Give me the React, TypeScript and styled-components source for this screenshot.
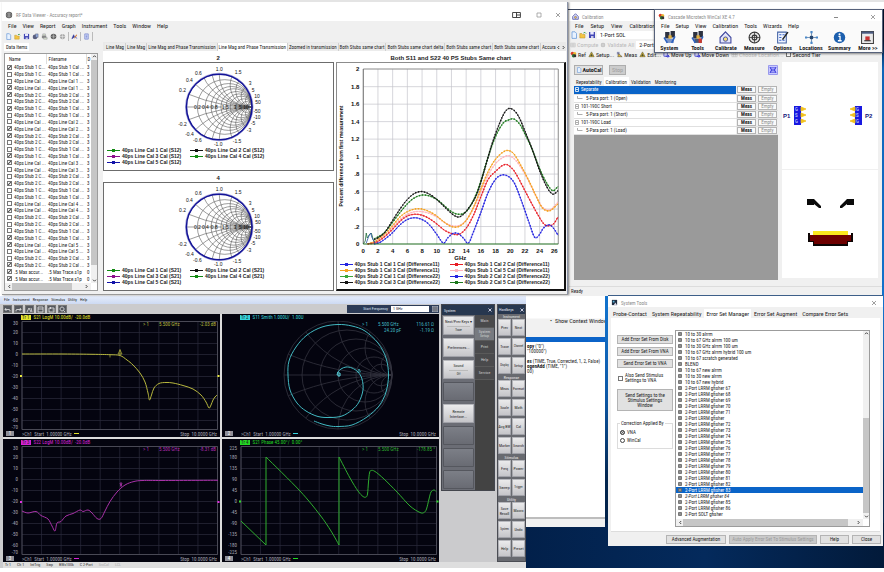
import React from 'react';
import styled, { createGlobalStyle, css } from 'styled-components';

const UI = '"Roboto Condensed", Roboto, "Liberation Sans", sans-serif';
const BOLD = '"Liberation Sans", Arial, sans-serif';

const Global = createGlobalStyle`
  *, *::before, *::after { box-sizing: border-box; }
  body { margin: 0; background: #fff; font: 6px/8px ${UI}; color: #1c1c1c; }
  button, input, select { font: inherit; color: inherit; margin: 0; padding: 0; border-radius: 0; }
  svg { display: block; flex: none; }
`;

/* ---------- desktop and shared window parts ---------- */

const Desktop = styled.main`
  position: relative;
  min-height: 572px;
  overflow: hidden;
  background: #fff;
  border-top: 2px solid #e4e4e4;
`;

const Wallpaper = styled.div`
  position: absolute;
  top: 7px; right: 0; bottom: 4px; left: 569px;
  background:
    linear-gradient(180deg, #04122c 0, #04122c 30px, rgba(8, 80, 150, 0) 60px),
    linear-gradient(180deg, #0d62b4 0, #1272cc 300px, #0d57a4 390px, #03264f 470px, #021f44 100%);
`;
const WallpaperFoot = styled.div`
  position: absolute;
  height: 45px; right: 0; bottom: 4px; left: 526px;
  background: linear-gradient(90deg, #02204a, #042a5c 50%, #021a3a);
`;

const Window = styled.section<{ $bg?: string }>`
  position: absolute;
  display: flex;
  flex-direction: column;
  overflow: hidden;
  background: ${p => p.$bg || '#f0f0f0'};
`;

const RfWindow = styled(Window)`
  top: 0; left: 2px; right: 316px; height: 293px;
  border-bottom: 1px solid #9a9a9a;
  border-right: 1px solid #8a93a8;
  box-shadow: 1px 0 2px rgba(0, 0, 0, .5);
`;
const CalWindow = styled(Window)`top: 7px; left: 568px; right: 2px; height: 287px; padding-left: 1px; border-top: 1px solid #39445c;`;
const WinCalWindow = styled(Window)`
  top: 7px; left: 654px; right: 1px; height: 44px; background: #fafafa;
  border: 1px solid #56617a; box-shadow: 0 1px 2px rgba(0, 0, 0, .45);
`;
const VnaWindow = styled(Window)`top: 294px; left: 0; right: 358px; bottom: 4px;`;
const ScriptWindow = styled(Window)`top: 294px; left: 526px; right: 279px; height: 231px; background: #fff;`;
const ToolsWindow = styled(Window)`
  top: 293px; left: 608px; right: 1px; height: 251px;
  border: 1px solid #3d5e88; border-width: 1px 0 0;
`;

const TitleBar = styled.header<{ $h: number }>`
  display: flex; align-items: center; gap: 3px;
  flex: 0 0 ${p => p.$h}px;
  padding: 2px 5px 0 3px;
  background: #fff;
  color: #8c8c8c;
  font-size: 5px;
`;
const RfTitleBar = styled(TitleBar)`padding-top: 6px;`;
const TitleText = styled.h1`margin: 0; flex: 1; font: inherit; white-space: nowrap;`;
const Caption = styled.button<{ $gap?: number }>`
  border: 0; background: none; width: 8px; height: 8px; margin-left: ${p => p.$gap ?? 8}px;
`;
const Menu = styled.nav<{ $gap: number; $h: number }>`
  display: flex; align-items: center; gap: ${p => p.$gap}px;
  flex: 0 0 ${p => p.$h}px;
  padding-left: 6px;
`;
const MenuItem = styled.button<{ $small?: boolean }>`
  border: 0; background: none; white-space: nowrap; color: #222;
  ${p => p.$small && css`font-size: 4px;`}
`;
const Bar = styled.div<{ $h: number; $gap?: number; $pad?: number }>`
  display: flex; align-items: center; gap: ${p => p.$gap ?? 2}px;
  flex: 0 0 ${p => p.$h}px;
  padding-left: ${p => p.$pad ?? 3}px;
  overflow: hidden;
`;
const IconButton = styled.button<{ $dim?: boolean }>`
  display: flex; align-items: center; gap: 1px; border: 0; background: none; white-space: nowrap;
  color: ${p => (p.$dim ? '#a8a8a8' : '#222')};
  opacity: ${p => (p.$dim ? .75 : 1)};
`;
const Check = styled.input.attrs({ type: 'checkbox' })`
  appearance: none; display: block; flex: none; width: 5px; height: 5px;
  border: 1px solid #777; background: #fff;
  &:checked { background: linear-gradient(135deg, #fff 30%, #555 45%, #555 60%, #fff 70%); }
`;
const Close = () => (
  <svg width="8" height="8" viewBox="0 0 8 8" stroke="#888" strokeWidth=".8"><path d="M2 2l4 4M6 2l-4 4" /></svg>
);

/* ---------- small icons ---------- */

const GLYPHS: Record<string, React.ReactNode> = {
  globe: <><circle cx="4" cy="4" r="3.2" fill="#555" /><path d="M1 4h6M4 1v6M2 2q2 2 4 0M2 6q2-2 4 0" stroke="#ccc" strokeWidth=".5" fill="none" /></>,
  globe2: <><circle cx="4" cy="4" r="3" fill="#aaa" /><path d="M1 4h6M4 1v6" stroke="#eee" strokeWidth=".6" /></>,
  page: <path d="M2 .8h3l1.500 1.600v5H2z" fill="#e8f2ff" stroke="#5a8fd6" strokeWidth=".7" />,
  open: <><path d="M.8 7V2.500h2l1 1H6V7z" fill="#f4c542" stroke="#b8902c" strokeWidth=".5" /><path d="M4.500 2q1.500-1.500 2.500.5" stroke="#2a9a3a" strokeWidth=".9" fill="none" /></>,
  save: <><path d="M1 1h6v6H1z" fill="#4348b4" /><path d="M2.300 1h3.400v2.500H2.300z" fill="#e8e8ff" /><path d="M3 5h2.500v2H3z" fill="#c9c9e8" /></>,
  saveAll: <><circle cx="3.500" cy="4.500" r="2.700" fill="#5a5f80" /><path d="M4 1h3v4H4z" fill="#8fa6d8" stroke="#445" strokeWidth=".4" /></>,
  tools: <><path d="M1 1h6v6H1z" fill="#1d2b3f" /><path d="M2 2h2v2H2z" fill="#58b0d8" /><path d="M5 4l2 3H3z" fill="#d8d8e8" /></>,
  print: <><path d="M1 3h5v3H1z" fill="#888" /><path d="M2 1h3v2H2zM3 5h4v2H3z" fill="#dde6d0" stroke="#667" strokeWidth=".4" /></>,
  wand: <><path d="M1 6.500L3 2l1 2.500z" fill="#333b9e" stroke="#333b9e" strokeWidth=".7" /><path d="M4 6l2.500-4" stroke="#d0732c" strokeWidth="1.200" /><path d="M5 5l2 1" stroke="#5566cc" /></>,
  doc: <path d="M2 1h4v6H2zM3 2.500h2M3 4h2M3 5.500h2" fill="#dfe6ff" stroke="#5c6fc4" strokeWidth=".7" />,
  cal: <><path d="M4 .8L7.200 4v3.200H.8V4z" fill="#dfe2ff" stroke="#3a3f96" strokeWidth=".8" /><circle cx="4" cy="5" r="1.300" fill="#f0c040" stroke="#3a3f96" strokeWidth=".5" /></>,
  multi: <><circle cx="2.800" cy="2.800" r="2" fill="#d83a2a" /><circle cx="5.400" cy="3" r="1.800" fill="#eab830" /><circle cx="4" cy="5.400" r="2" fill="#2d7a3b" /><path d="M4 4h3v3H4z" fill="#333" /></>,
  gearY: <><path d="M1 6.500L4 1l3 5.500z" fill="#efc12e" stroke="#4a4a2a" strokeWidth=".6" /><path d="M4 3v3M2.500 5h3" stroke="#343" strokeWidth=".8" /></>,
  probe: <><path d="M1 1h3v3H1z" fill="#8b8fb0" /><path d="M3 3l4 3.500H2z" fill="#e6bb38" stroke="#444" strokeWidth=".6" /></>,
  arrow: <><path d="M1 1h4v5H1z" fill="#dfe2ff" stroke="#3838c0" strokeWidth=".8" /><path d="M3 6h4M5.500 4.500L7 6 5.500 7.500" stroke="#2020d0" fill="none" /></>,
  grey: <path d="M1 1.500h6v5H1zM1 4h6M3 1.500v5M5 1.500v5" fill="#eee" stroke="#aaa" strokeWidth=".7" />,
};
const Glyph = ({ name, size = 7 }: { name: string; size?: number }) => (
  <svg width={size} height={size} viewBox="0 0 8 8">{GLYPHS[name]}</svg>
);

/* ---------- curve helpers ---------- */

type Pt = [number, number];
const smooth = (p: Pt[]) => {
  let d = `M${p[0][0]} ${p[0][1]}`;
  for (let i = 0; i < p.length - 1; i++) {
    const a = p[i - 1] || p[i], b = p[i], c = p[i + 1], e = p[i + 2] || c;
    d += `C${(b[0] + (c[0] - a[0]) / 6).toFixed(2)} ${(b[1] + (c[1] - a[1]) / 6).toFixed(2)} ${(c[0] - (e[0] - b[0]) / 6).toFixed(2)} ${(c[1] - (e[1] - b[1]) / 6).toFixed(2)} ${c[0]} ${c[1]}`;
  }
  return d;
};
const pairs = (s: string): Pt[] => s.trim().split(/\s+/).map(q => q.split(',').map(Number) as Pt);

const SmithGrid = ({ id, cx, cy, r, rs, xs, color, w }: { id: string; cx: number; cy: number; r: number; rs: number[]; xs: number[]; color: string; w: number }) => (
  <g stroke={color} strokeWidth={w} fill="none">
    <clipPath id={id}><circle cx={cx} cy={cy} r={r} /></clipPath>
    <circle cx={cx} cy={cy} r={r} />
    <path d={`M${cx - r} ${cy}h${2 * r}`} />
    {rs.map(k => <circle key={k} cx={cx + (r * k) / (1 + k)} cy={cy} r={r / (1 + k)} />)}
    <g clipPath={`url(#${id})`}>
      {xs.map(x => (
        <React.Fragment key={x}>
          <circle cx={cx + r} cy={cy - r / x} r={r / x} />
          <circle cx={cx + r} cy={cy + r / x} r={r / x} />
        </React.Fragment>
      ))}
    </g>
  </g>
);

/* ---------- RF Data Viewer ---------- */

const RfBody = styled.div`display: flex; flex: 1; min-height: 0; gap: 5px; padding: 0 1px 3px 2px;`;
const DataPane = styled.aside`display: flex; flex-direction: column; flex: 0 0 94px; padding-top: 1px;`;
const PaneTab = styled.h2`
  margin: 0; align-self: flex-start; padding: 0 2px; height: 8px;
  font: 5px/8px ${UI}; background: #fff; white-space: nowrap;
`;
const ListBox = styled.div`
  display: grid; grid-template-columns: 1fr 6px; grid-template-rows: 1fr 7px;
  flex: 1; min-height: 0; margin-top: 2px;
  border: 1px solid #9c9c9c; background: #fff;
`;
const ListClip = styled.div`overflow: hidden; min-height: 0; padding-left: 2px;`;
const ItemTable = styled.table`
  width: 100%; height: 235px; border-collapse: collapse; table-layout: fixed;
  font-size: 5px; line-height: 6px; white-space: nowrap;
  th { height: 10px; font-weight: normal; text-align: left; padding: 0 0 0 2px; border-right: 1px solid #ddd; }
  td { padding: 0; overflow: hidden; }
  th:nth-child(1) { width: 39px; }
  th:nth-child(2) { width: 40px; }
  th:nth-child(3) { padding-left: 1px; border-right: 0; }
  td:nth-child(2) { padding-left: 2px; }
  td:nth-child(3) { padding-left: 1px; }
`;
const ItemLabel = styled.label`display: flex; align-items: center; gap: 2px; height: 6px; white-space: nowrap;`;
const VScroll = styled.div<{ $top: number; $size: number }>`
  display: flex; flex-direction: column; justify-content: space-between; align-items: center;
  background: linear-gradient(#c6c6c6, #c6c6c6) 0 ${p => p.$top}px / 100% ${p => p.$size}px no-repeat #f0f0f0;
`;
const HScroll = styled.div<{ $to: string }>`
  display: flex; justify-content: space-between; align-items: center; padding: 0 2px;
  background: linear-gradient(#c6c6c6, #c6c6c6) 7px 0 / ${p => p.$to} 100% no-repeat #f0f0f0;
`;
const Arrow = ({ d }: { d: 'u' | 'd' | 'l' | 'r' }) => (
  <svg width="5" height="5" viewBox="0 0 5 5" fill="none" stroke="#333" strokeWidth=".9">
    <path d={{ u: 'M1 3.200L2.500 1.700 4 3.200', d: 'M1 1.700L2.500 3.200 4 1.700', l: 'M3.200 1L1.700 2.500 3.200 4', r: 'M1.700 1L3.200 2.500 1.700 4' }[d]} />
  </svg>
);

const GraphPane = styled.div`display: flex; flex-direction: column; flex: 1; min-width: 0;`;
const TabStrip = styled.div`
  display: flex; align-items: center; flex: 0 0 9px; padding-top: 1px; min-width: 0; overflow: hidden; background: #e9e9e9;
`;
const ViewTab = styled.button<{ $on?: boolean }>`
  border: 0; border-right: 1px solid #d0d0d0; height: 8px; padding: 0 1px; flex: none;
  font-size: 5px; line-height: 8px; white-space: nowrap;
  background: ${p => (p.$on ? '#fff' : '#ececec')};
`;
const TabCut = styled.div`display: flex; flex: 1; min-width: 0; overflow: hidden; padding-left: 2px;`;
const GraphArea = styled.div`
  display: grid; grid-template-columns: 1fr 1fr; gap: 2px; flex: 1; min-height: 0; background: #fff;
`;
const GraphColumn = styled.div`display: flex; flex-direction: column; min-width: 0;`;
const GraphTitle = styled.h3`
  margin: 0; height: 11px; text-align: center; white-space: nowrap;
  font: bold 6px/15px ${BOLD};
`;
const SmithPanel = styled.div`flex: 1; border: 1px solid #6c6c6c; background: #fff;`;
const ChartPanel = styled.div`
  flex: 1; border: 1px solid #8c8c8c; border-right: 2px solid #111; border-bottom: 2px solid #111; background: #fff;
`;
const Legend = styled.ul<{ $cols: string }>`
  display: grid; grid-template-columns: ${p => p.$cols}; margin: 0; padding: 0 0 0 3px; list-style: none;
`;
const LegendItem = styled.li<{ $c: string }>`
  display: flex; align-items: center; gap: 2px; white-space: nowrap;
  font: bold 5px/6px ${BOLD};
  &::before {
    content: ''; width: 13px; height: 3px;
    background:
      linear-gradient(${p => p.$c}, ${p => p.$c}) 5px 0 / 3px 3px no-repeat,
      linear-gradient(${p => p.$c}, ${p => p.$c}) 0 1px / 100% 1px no-repeat;
  }
`;

const CHECKED = [0, 3, 4, 6, 9, 10, 13, 14, 17, 21, 25, 26, 29, 30, 31, 32];
const KINDS = 'S1 S1 L1 L1 S2 S2 S1 S1 L2 L2 S2 S2 S1 S1 L3 L3 S2 S2 S1 S1 L4 L4 S2 S2 S1 S1 L5 L5 S2 S2'.split(' ');
const ITEMS = KINDS.map(k =>
  k[0] === 'S' ? [`40ps Stub ${k[1]} C...`, `40ps Stub ${k[1]} Cal ...`, '3'] : ['40ps Line Cal ...', `40ps Line Cal ${k[1]} ...`, '3'],
).concat([['.5 Max accur...', '.5 Max Trace.s1p', '0'], ['.5 Max accur...', '.5 Max Trace.s1p', '0'], ['.5 Max Trace...', '.5 S11...', '']]);

const VIEW_TABS = ['Line Mag', 'Line Mag', 'Line Mag and Phase Transmission', 'Line Mag and Phase Transmission', 'Zoomed in transmission', 'Both Stubs same chart', 'Both Stubs same chart delta', 'Both Stubs same chart', 'Both Stubs same chart', 'Accura'];

const SMITH_LABELS: [string, number, number][] = [
  ['1.0', 116, 8], ['0.6', 95, 12], ['0.4', 86, 19], ['0.2', 79, 29], ['-0.2', 79, 63], ['-0.4', 86, 73], ['-0.6', 94, 79],
  ['-1.0', 115, 83], ['-1.5', 134, 80], ['-3', 146, 69], ['-5', 150, 62], ['-10', 154, 56], ['-50', 154, 50],
  ['50', 155, 41], ['10', 154, 35], ['5', 150, 29], ['3', 147, 22], ['1.5', 135, 11],
  ['0.2', 94, 46], ['0.4', 102, 46], ['0.8', 111, 46], ['1.5', 122, 46], ['3', 132, 46], ['5', 137, 46], ['10', 143, 46],
];
const SmallSmith = ({ id }: { id: string }) => (
  <svg width="100%" height="84" viewBox="0 0 230 84">
    <SmithGrid id={id} cx={116} cy={44} r={33} rs={[0.2, 0.4, 0.6, 0.8, 1.1, 1.5, 2, 3, 5, 10]} xs={[0.2, 0.4, 0.6, 0.8, 1, 1.5, 2, 3, 5, 10]} color="#5a5a5a" w={0.6} />
    <circle cx="116" cy="44" r="34" fill="none" stroke="#a9a9dc" strokeWidth="1" />
    <circle cx="116" cy="44" r="33" fill="none" stroke="#14149a" strokeWidth="1.500" />
    <g fontFamily={BOLD} fontSize="5" fill="#111" textAnchor="middle">
      {SMITH_LABELS.map(([t, x, y], i) => <text key={i} x={x} y={y}>{t}</text>)}
    </g>
  </svg>
);
const LINE_COLORS = ['#128a12', '#111', '#8b108b', '#128a12', '#1212a8'];
const SmithLegend = ({ s }: { s: string }) => (
  <Legend $cols="83px 1fr">
    {LINE_COLORS.map((c, i) => <LegendItem key={i} $c={c}>{`40ps Line Cal ${i + 1} Cal (${s})`}</LegendItem>)}
  </Legend>
);

const SERIES: [string, string][] = [
  ['#ffb3bb', '0.6,0 1.8,.03 3,.1 4,.19 5,.28 6,.34 7,.37 8,.37 9,.35 10,.31 11,.25 12,.21 13,.21 14,.27 15,.41 16,.6 17,.79 18,.92 19,.99 19.8,1.01 20.6,.97 21.5,.87 22.5,.72 23.5,.55 24.3,.43 25,.39 25.6,.4 26.5,.48'],
  ['#f5a11f', '0.6,0 1.8,.04 3,.12 4,.21 5,.31 6,.37 7,.4 8,.4 9,.37 10,.32 11,.25 12,.2 13,.2 14,.27 15,.42 16,.63 17,.83 18,.97 19,1.05 19.7,1.07 20.5,1.03 21.5,.89 22.5,.73 23.5,.55 24.3,.42 25,.38 25.6,.39 26.5,.46'],
  ['#e81c24', '0.6,0 1.8,.02 3,.09 4,.17 5,.26 6,.32 7,.34 8,.33 9,.29 10,.23 11,.16 12,.12 13,.11 14,.18 15,.33 16,.54 17,.74 18,.83 18.8,.89 19.5,.91 20.3,.86 21,.77 22,.61 23,.45 24,.3 24.7,.22 25.3,.21 25.9,.23 26.5,.31'],
  ['#2424e0', '1.5,0 2.3,.02 3,.06 4,.13 5,.22 6,.28 7,.3 8,.28 9,.22 10,.11 10.9,.01 11.5,.07 12.2,.12 12.9,.12 13.6,.07 14.3,.01 15,.14 16,.36 17,.59 18,.74 18.9,.79 19.8,.77 20.6,.69 21.5,.5 22.5,.26 23.3,.08 23.9,.1 24.5,.18 25.2,.22 25.8,.19 26.5,.1'],
  ['#1d7a1d', '1.5,.06 2.2,.09 3,.14 4,.25 5,.36 6,.46 7,.53 8,.56 9,.55 10,.51 11,.44 12,.37 13,.34 14,.37 15,.5 16,.72 17,1 18,1.23 19,1.38 19.8,1.42 20.5,1.43 21.3,1.37 22,1.26 23,1.08 24,.86 25,.69 25.8,.61 26.5,.66'],
  ['#161616', '1.5,.05 2.2,.08 3,.14 4,.27 5,.4 6,.51 7,.58 8,.6 9,.57 10,.51 11,.43 12,.35 12.8,.31 13.5,.33 14.500,.43 15.500,.58 16.500,.85 17.500,1.14 18.500,1.37 19.200,1.5 19.800,1.55 20.500,1.53 21.200,1.45 22,1.29 23,1.08 24,.84 25,.65 25.800,.57 26.500,.61'],
];
const px = (g: number) => 26 + g * 7.35;
const py = (v: number) => 181 - v * 87.4;
const StubChart = () => (
  <svg width="100%" height="198" viewBox="0 0 227 198">
    <g stroke="#c4c4cc" strokeWidth=".7">
      {Array.from({ length: 13 }, (_, i) => <path key={i} d={`M${px(2 * i + 2)} 6V181`} />)}
      {Array.from({ length: 9 }, (_, i) => <path key={i} d={`M26 ${py(0.2 * (i + 1))}H221`} />)}
    </g>
    <path d="M26 6H221V181" fill="none" stroke="#8a8a8a" />
    <path d="M26 6V181" stroke="#666" />
    {SERIES.map(([c, s]) => {
      const d = smooth(pairs(s).map(([g, v]) => [+px(g).toFixed(2), +py(v).toFixed(2)] as Pt));
      return (
        <g key={c} fill="none" stroke={c}>
          <path d={d} strokeWidth=".8" />
          <path d={d} strokeWidth="1.500" strokeDasharray="1.200 1.800" />
        </g>
      );
    })}
    <path d="M26 181L28 178l1-8 1 5 2-3 2-2 1 3 1 4 2 2" fill="none" stroke="#1f6e3a" strokeWidth=".8" />
    <path d="M29 180l3-8 1.500-2 1 4 3 6" fill="none" stroke="#2a52a8" strokeWidth=".8" />
    <path d="M26 181H221" stroke="#1d6a1d" strokeWidth="1.200" />
    <g fontFamily={BOLD} fontSize="6" fontWeight="bold" fill="#111">
      {['0', '.2', '.4', '.6', '.8', '1', '1.2', '1.4', '1.6', '1.8', '2'].map((t, i) => (
        <text key={t} x="22" y={py(i * 0.2) + 2} textAnchor="end">{t}</text>
      ))}
      {Array.from({ length: 14 }, (_, i) => <text key={i} x={px(i * 2)} y="190" textAnchor="middle">{i * 2}</text>)}
      <text x="123" y="197" textAnchor="middle">GHz</text>
      <text transform="translate(6 93) rotate(-90)" textAnchor="middle" fontSize="5">Percent difference from first measurement</text>
    </g>
  </svg>
);
const STUB_LEGEND: [string, string][] = [
  ['#2424e0', '40ps Stub 1 Cal 1 Cal (Difference11)'], ['#e81c24', '40ps Stub 1 Cal 2 Cal (Difference11)'],
  ['#f5a11f', '40ps Stub 1 Cal 3 Cal (Difference11)'], ['#ffb3bb', '40ps Stub 1 Cal 5 Cal (Difference11)'],
  ['#3aa83a', '40ps Stub 2 Cal 1 Cal (Difference22)'], ['#2424e0', '40ps Stub 2 Cal 2 Cal (Difference22)'],
  ['#161616', '40ps Stub 2 Cal 3 Cal (Difference22)'], ['#1d7a1d', '40ps Stub 2 Cal 5 Cal (Difference22)'],
];

const RfViewer = () => (
  <RfWindow>
    <RfTitleBar $h={19}>
      <Glyph name="globe" size={8} />
      <TitleText>RF Data Viewer - Accuracy report*</TitleText>
      <Caption aria-label="Snap layout">
        <svg width="9" height="8" viewBox="0 0 9 8" fill="none" stroke="#333" strokeWidth=".9"><path d="M.6 1.500h7.800v5H.6zM4.500 1.500v5M4.500 4h4" /></svg>
      </Caption>
      <Caption $gap={12} aria-label="Maximize"><svg width="8" height="8" viewBox="0 0 8 8"><path d="M2 2h4v4H2z" fill="none" stroke="#999" strokeWidth=".8" /></svg></Caption>
      <Caption aria-label="Close"><Close /></Caption>
    </RfTitleBar>
    <Menu $gap={6} $h={9}>
      {['File', 'View', 'Report', 'Graph', 'Instrument', 'Tools', 'Window', 'Help'].map(m => <MenuItem key={m}>{m}</MenuItem>)}
    </Menu>
    <Bar $h={12}>
      {['page', 'open', 'save', 'saveAll', 'print', 'globe', 'globe2'].map(n => <IconButton key={n} aria-label={n}><Glyph name={n} /></IconButton>)}
      <svg width="1" height="9"><path d="M.5 0v9" stroke="#bbb" /></svg>
      <IconButton aria-label="wand"><Glyph name="wand" /></IconButton>
      <svg width="1" height="9"><path d="M.5 0v9" stroke="#bbb" /></svg>
      <IconButton aria-label="doc"><Glyph name="doc" /></IconButton>
      <svg width="1" height="9"><path d="M.5 0v9" stroke="#bbb" /></svg>
    </Bar>
    <RfBody>
      <DataPane>
        <PaneTab>Data Items</PaneTab>
        <ListBox>
          <ListClip>
            <ItemTable>
              <thead><tr><th>Name</th><th>Filename</th><th>D</th></tr></thead>
              <tbody>
                {ITEMS.map(([n, f, c], i) => (
                  <tr key={i}>
                    <td><ItemLabel><Check defaultChecked={CHECKED.includes(i)} />{n}</ItemLabel></td>
                    <td>{f}</td><td>{c}</td>
                  </tr>
                ))}
              </tbody>
            </ItemTable>
          </ListClip>
          <VScroll $top={6} $size={205}><Arrow d="u" /><Arrow d="d" /></VScroll>
          <HScroll $to="60px"><Arrow d="l" /><Arrow d="r" /></HScroll>
        </ListBox>
      </DataPane>
      <GraphPane>
        <TabStrip>
          <TabCut>{VIEW_TABS.map((t, i) => <ViewTab key={i} $on={i === 3}>{t}</ViewTab>)}</TabCut>
          <Arrow d="l" /><Arrow d="r" />
        </TabStrip>
        <GraphArea>
          <GraphColumn>
            <GraphTitle>2</GraphTitle>
            <SmithPanel><SmallSmith id="s12" /><SmithLegend s="S12" /></SmithPanel>
            <GraphTitle>4</GraphTitle>
            <SmithPanel><SmallSmith id="s21" /><SmithLegend s="S21" /></SmithPanel>
          </GraphColumn>
          <GraphColumn>
            <GraphTitle>Both S11 and S22 40 PS Stubs Same chart</GraphTitle>
            <ChartPanel>
              <StubChart />
              <Legend $cols="110px 1fr">{STUB_LEGEND.map(([c, t], i) => <LegendItem key={i} $c={c}>{t}</LegendItem>)}</Legend>
            </ChartPanel>
          </GraphColumn>
        </GraphArea>
      </GraphPane>
    </RfBody>
  </RfWindow>
);

/* ---------- Calibration ---------- */

const CalBody = styled.div`display: grid; grid-template-columns: 1fr 96px; gap: 4px; flex: 1; padding: 2px 4px 0 5px;`;
const CalLeft = styled.div`display: flex; flex-direction: column;`;
const CalActions = styled.div`display: flex; align-items: center; gap: 6px; flex: 0 0 15px;`;
const RaisedButton = styled.button<{ $w?: number }>`
  display: flex; align-items: center; justify-content: center; gap: 1px;
  width: ${p => (p.$w ? p.$w + 'px' : 'auto')}; height: 10px;
  border: 1px solid #adadad; background: #e1e1e1; font-weight: bold; white-space: nowrap;
  &:disabled { color: #a0a0a0; background: #ccc; font-weight: normal; }
`;
const PushRight = styled.span`margin-left: auto;`;
const SubTabs = styled.div`display: flex; flex: 0 0 9px;`;
const SubTab = styled.button<{ $on?: boolean }>`
  border: 0; padding: 0 2px; font-size: 5px; line-height: 8px; background: ${p => (p.$on ? '#fff' : 'none')};
`;
const GridArea = styled.div`flex: 1; background: #9a9a9a;`;
const CalTable = styled.table`
  width: 100%; border-collapse: collapse; background: #fff; font-size: 5px; line-height: 7px;
  td { height: 8px; padding: 0; border-bottom: 1px solid #e0e0e0; white-space: nowrap; }
  td + td { width: 21px; padding-left: 1px; background: #f0f0f0; }
`;
const CalRow = styled.tr<{ $on?: boolean }>`
  ${p => p.$on && css`td:first-child { background: #0a64c8; color: #fff; }`}
`;
const CalName = styled.span<{ $child: boolean }>`
  display: flex; align-items: center; gap: 2px; padding-left: ${p => (p.$child ? 3 : 1)}px;
`;
const CellButton = styled.button<{ $dim?: boolean }>`
  display: block; width: 19px; height: 7px; border: 1px solid #b4b4b4; background: #fafafa;
  font-size: 5px; line-height: 5px; font-weight: ${p => (p.$dim ? 'normal' : 'bold')};
  color: ${p => (p.$dim ? '#8a8a8a' : '#222')};
`;
const CalRight = styled.div`display: flex; flex-direction: column; gap: 1px;`;
const White = styled.div`background: #fff;`;
const StatusBar = styled.footer`
  flex: 0 0 10px; margin-top: 6px; padding-left: 2px; border-top: 1px solid #dcdcdc; font-size: 5px; line-height: 8px;
`;
const Combo = styled.select<{ $w: number }>`
  appearance: none; border: 0; width: ${p => p.$w}px; height: 8px; padding-left: 3px; background: #fff;
`;
const CAL_ROWS = ['Separate', '5-Para port: 1 (Open)', '101-190C Short', '5-Para port: 1 (Short)', '101-190C Load', '5-Para port: 1 (Load)'];

const ProbeHead = ({ x, flip }: { x: number; flip?: boolean }) => (
  <g>
    <path d={`M${x} 44h7v19h-7z`} fill="#1818e0" />
    {[47, 53, 59].map(y => <path key={y} d={flip ? `M${x} ${y - 2}l-5 2 5 2z` : `M${x + 7} ${y - 2}l5 2-5 2z`} fill="#f2c21c" stroke="#f2c21c" strokeWidth=".8" />)}
    <g fontFamily={UI} fontSize="5" fill="#dfe0ff"><text x={x + 1} y="49">G</text><text x={x + 1} y="55">S</text><text x={x + 1} y="61">G</text></g>
  </g>
);

const Calibration = () => (
  <CalWindow>
    <TitleBar $h={11}><Glyph name="cal" /><TitleText>Calibration</TitleText></TitleBar>
    <Menu $gap={7} $h={9}>{['File', 'Setup', 'View', 'Calibration'].map(m => <MenuItem key={m}>{m}</MenuItem>)}</Menu>
    <Bar $h={10} $gap={1} $pad={1}>
      {['page', 'open', 'save'].map(n => <IconButton key={n} aria-label={n}><Glyph name={n} size={8} /></IconButton>)}
      <Combo $w={60} aria-label="Standard"><option>1-Port SOL</option></Combo>
    </Bar>
    <Bar $h={9} $gap={2} $pad={1}>
      <IconButton $dim><Glyph name="grey" size={6} />Compute</IconButton>
      <IconButton $dim><Glyph name="globe2" size={6} />Validate All</IconButton>
      <Combo $w={40} aria-label="Ports"><option>2-Port S</option></Combo>
    </Bar>
    <Bar $h={11} $gap={2} $pad={1}>
      <IconButton><Glyph name="multi" />Ref</IconButton>
      <IconButton><Glyph name="gearY" />Setup...</IconButton>
      <IconButton><Glyph name="probe" />Meas</IconButton>
      <IconButton><Glyph name="gearY" />Edit...</IconButton>
      <IconButton><Glyph name="arrow" />Move Up</IconButton>
      <IconButton><Glyph name="arrow" />Move Down</IconButton>
      <IconButton $dim><Glyph name="grey" />Choose Location...</IconButton>
      <ItemLabel><Check />Second Tier</ItemLabel>
    </Bar>
    <CalBody>
      <CalLeft>
        <CalActions>
          <RaisedButton $w={29}><Glyph name="page" size={6} />AutoCal</RaisedButton>
          <RaisedButton $w={17} disabled>Stop</RaisedButton>
          <PushRight>
            <svg width="10" height="10" viewBox="0 0 10 10"><path d="M.5 .5h9v9h-9z" fill="#c9caff" stroke="#9a9aec" /><path d="M2 2l1.500 3L2 8M8 2L6.500 5 8 8M3.500 5h3M4 2v1.500M6 2v1.500M4 6.500V8M6 6.500V8" stroke="#2a2ad8" fill="none" /></svg>
          </PushRight>
        </CalActions>
        <SubTabs>{['Repeatability', 'Calibration', 'Validation', 'Monitoring'].map((t, i) => <SubTab key={t} $on={i === 1}>{t}</SubTab>)}</SubTabs>
        <GridArea>
          <CalTable>
            <tbody>
              {CAL_ROWS.map((t, i) => (
                <CalRow key={t} $on={i === 0}>
                  <td>
                    <CalName $child={i % 2 === 1}>
                      <svg width={i % 2 ? 7 : 4} height="5" fill="none" stroke={i ? '#999' : '#fff'} strokeWidth=".8"><path d={i % 2 ? 'M.5 0v2.500h5' : 'M.5 .5h3v4h-3zM1 2.500h2'} /></svg>
                      {t}
                    </CalName>
                  </td>
                  <td><CellButton>Meas</CellButton></td>
                  <td><CellButton $dim>Empty</CellButton></td>
                </CalRow>
              ))}
            </tbody>
          </CalTable>
        </GridArea>
      </CalLeft>
      <CalRight>
        <White>
          <svg width="100%" height="107" viewBox="0 0 96 107">
            <ProbeHead x={12} /><ProbeHead x={73} flip />
            <g fontFamily={BOLD} fontWeight="bold" fontSize="6" fill="#14147a"><text x="1" y="56">P1</text><text x="83" y="56">P2</text></g>
          </svg>
        </White>
        <White>
          <svg width="100%" height="108" viewBox="0 0 96 108">
            <path d="M25 29h7l7 7v2h-2l-5-4v1h-7zM72 29h-7l-7 7v2h2l5-4v1h7z" fill="#0a0a0a" />
            <path d="M31 61h35v4H31z" fill="#fbe81e" />
            <path d="M26 63h2v2h41v-2h2v9h-5v4H31v-4h-5z" fill="#0d0505" />
            <path d="M28 65h41v6h-4v3H32v-3h-4z" fill="#6e0000" />
          </svg>
        </White>
      </CalRight>
    </CalBody>
    <StatusBar>Ready</StatusBar>
  </CalWindow>
);

/* ---------- WinCal ---------- */

const LaunchBar = styled.div`display: grid; grid-template-columns: repeat(8, 1fr); flex: 1; min-height: 0;`;
const Launch = styled.button`
  display: flex; flex-direction: column; align-items: center; border: 0; background: none;
  font-weight: bold; line-height: 7px; white-space: nowrap;
`;
const Machine = ({ c }: { c: string }) => (
  <><path d="M2 1h4v6H2zM7 0h4v6H7z" fill="#2c3140" /><path d="M3 7h7v4H3z" fill={c} /><path d="M1 6l3 5M11 5L8 11" stroke="#2d62c0" strokeWidth="1.500" /><path d="M5 4h3v3H5z" fill="#e6b23a" /></>
);
const LAUNCH: [string, React.ReactNode][] = [
  ['System', <Machine key="a" c="#7b95c8" />],
  ['Tools', <><Machine c="#4a5a78" /><path d="M7 7h3v4H7z" fill="#d23a2a" /></>],
  ['Calibrate', <><path d="M6 .8L11 6v5H1V6z" fill="#e4e6fb" stroke="#3d459c" /><circle cx="6" cy="7.500" r="2" fill="#f3df7a" stroke="#3d459c" strokeWidth=".8" /></>],
  ['Measure', <><circle cx="6" cy="6" r="5" fill="#e2e2e2" stroke="#333" /><circle cx="6" cy="6" r="2.200" fill="none" stroke="#333" /><path d="M1 6h10M6 1v10" stroke="#333" strokeWidth=".7" /></>],
  ['Options', <><path d="M1.500 1h8v10h-8z" fill="#eef3ff" stroke="#4766a8" /><path d="M3 3.500h2M3 6h2M3 8.500h2M6 3.500h2M6 8.500h2" stroke="#3a64c8" /><path d="M11 1L6 8" stroke="#222" strokeWidth="1.400" /></>],
  ['Locations', <><path d="M6 0v12M0 6h12" stroke="#7796b8" /><path d="M4.500 4.500h3v3h-3z" fill="#27466e" /><path d="M0 5h2v2H0zM10 5h2v2h-2zM5 0h2v2H5zM5 10h2v2H5z" fill="#4b88c8" /></>],
  ['Summary', <><circle cx="6" cy="6" r="5.300" fill="#1c5fae" /><path d="M5 5h1.500v4M4.500 9h3.500" stroke="#fff" strokeWidth="1.200" fill="none" /><circle cx="6" cy="3" r=".9" fill="#fff" /></>],
  ['More >>', <><path d="M.5 .5h11v11H.5z" fill="#eaeaea" stroke="#444" /><path d="M.5 .5h11v2H.5z" fill="#4a5a80" /><path d="M4 5h4v4H4z" fill="#c83232" /><path d="M3 9h6" stroke="#333" /></>],
];
const WinCal = () => (
  <WinCalWindow>
    <TitleBar $h={11}>
      <Glyph name="multi" /><TitleText>Cascade Microtech WinCal XE 4.7</TitleText>
      <Caption aria-label="Minimize"><svg width="8" height="8"><path d="M2 4.500h4" stroke="#888" /></svg></Caption>
      <Caption $gap={26} aria-label="Close"><Close /></Caption>
    </TitleBar>
    <Menu $gap={6} $h={10}>{['File', 'Setup', 'View', 'Calibration', 'Tools', 'Wizards', 'Help'].map(m => <MenuItem key={m}>{m}</MenuItem>)}</Menu>
    <LaunchBar>
      {LAUNCH.map(([t, g]) => <Launch key={t}><svg width="13" height="13" viewBox="0 0 12 12">{g}</svg>{t}</Launch>)}
    </LaunchBar>
  </WinCalWindow>
);

/* ---------- Network analyzer ---------- */

const VnaMenu = styled(Menu)`background: linear-gradient(#e6edfb, #cddaf3); padding-left: 4px;`;
const VnaBody = styled.div`
  display: grid; grid-template-columns: 1fr 54px 29px; grid-template-rows: 10px 1fr 6px; column-gap: 2px;
  flex: 1; min-height: 0; background: #cbcbcd; padding: 0 0 0 3px;
`;
const VnaTools = styled.div`display: flex; align-items: center; gap: 2px; padding-bottom: 1px;`;
const DarkButton = styled.button`width: 9px; height: 8px; border: 1px solid #777; background: #55585e; display: grid; place-items: center;`;
const FreqBar = styled.label`
  display: flex; align-items: center; gap: 3px; margin-left: auto; height: 8px; padding: 0 1px 0 16px;
  background: #2c3b57; color: #dfe6f4; font-size: 4px; line-height: 8px; white-space: nowrap;
`;
const FreqInput = styled.input`width: 38px; height: 6px; border: 0; padding-left: 2px; background: #fff; color: #223; line-height: 6px;`;
const Plots = styled.div`display: grid; grid-template: 1fr 1fr / 1fr 1fr; gap: 2px; min-height: 0; background: #dcdcdc;`;
const Plot = styled.figure`display: flex; flex-direction: column; margin: 0; min-width: 0; background: #04040f; overflow: hidden;`;
const PlotHead = styled.figcaption<{ $c: string }>`
  display: flex; align-items: flex-start; gap: 3px; padding: 1px 0 0 18px; flex: 0 0 7px; color: ${p => p.$c};
  font-size: 5px; line-height: 5px; white-space: pre;
`;
const TraceTag = styled.b<{ $c: string }>`padding: 0 1px; background: ${p => p.$c}; color: #222; font-weight: normal;`;
const PlotFoot = styled.div`
  display: flex; align-items: center; gap: 8px; flex: 0 0 7px; padding: 0 3px; margin-top: auto;
  color: #a8a8b4; font-size: 5px; line-height: 6px; white-space: pre;
`;
const Chip = styled.span`width: 8px; height: 5px; background: #8e8e96; color: #fff; line-height: 5px; text-align: center;`;
const Dash = styled.span<{ $c: string }>`width: 5px; height: 1px; margin-left: -6px; background: ${p => p.$c};`;
const Spacer = styled.span`flex: 1;`;
const VnaStatus = styled.footer`
  grid-column: 1 / -1; display: flex; gap: 6px; padding-left: 2px; background: #dedede;
  font-size: 4px; line-height: 6px; white-space: nowrap;
`;
const StatusText = styled.span<{ $dim?: boolean }>`color: ${p => (p.$dim ? '#aaa' : '#333')};`;

const Axis = ({ labels }: { labels: number[] }) => (
  <>
    <g stroke="#2b2b3c" strokeWidth=".7">
      {labels.map((_, i) => <path key={i} d={`M19 ${Math.min(0.5 + i * 11, 108.5)}H214.500M${19 + i * 19.550} .5V108.500`} />)}
    </g>
    <path d="M19 .5H214.500V108.500H19z" fill="none" stroke="#54545f" strokeWidth=".8" />
    <g fontFamily={UI} fontSize="5" fill="#a4a4b4" textAnchor="end">
      {labels.map((l, i) => <text key={l} x="15" y={i === 0 ? 4 : i === 10 ? 108 : 2 + i * 11}>{l}</text>)}
    </g>
  </>
);
const Readout = ({ c, v }: { c: string; v: string }) => (
  <g fontFamily={UI} fontSize="5" fill={c}><text x="140" y="5">&gt; 1</text><text x="156" y="5">5.500  GHz</text><text x="213" y="5" textAnchor="end">{v}</text></g>
);
const DB = [30, 20, 10, 0, -10, -20, -30, -40, -50, -60, -70];
const PHASE = [225, 180, 135, 90, 45, 0, -45, -90, -135, -180, -225];

const Trace1 = () => (
  <>
    <Axis labels={DB} />
    <path d={smooth(pairs('19,33 60,33 90,33.300 107,33.700 117,34.500 124,39 130,44 137,52 142,61 145,72 146.500,79 148.500,74 151,67 156,62.500 163,61.500 170,62 180,64.500 190,68 198,74 203,81 206,87 208,84 210,79 212,76 214,74'))} fill="none" stroke="#b8b83e" />
    <path d="M107 34v2.500M117 29l-2 4h4zM117 28v6" stroke="#b8b83e" strokeWidth=".7" fill="none" />
    <path d="M17 54h2v2h-2zM214.500 54h2v2h-2z" fill="#e8e840" />
    <Readout c="#b8b83e" v="-2.03 dB" />
  </>
);
const Trace2 = () => (
  <>
    <SmithGrid id="big" cx={116} cy={54} r={54} rs={[0.2, 0.5, 1, 2, 4]} xs={[0.2, 0.5, 1, 2, 5]} color="#34343f" w={0.8} />
    <path d={smooth(pairs('92,100 100,103 108,105 116,105.500 130,104 145,96 157,85 164,71 166.500,54 164,37 156,22 143,10 130,5 116,3.500 100,6 85,14 74,26 67,40 66,54 68,69 75,82 84,90 96,95.500 108,96.500 120,95 130,89 137,81 141,69 140,58 136,51 130,47 124,46 119,48 116,51 115,54'))} fill="none" stroke="#42b9c2" />
    <path d="M115 52h3v3h-2v-2" fill="none" stroke="#5fe0ea" />
    <path d="M135.500 51l1.500-3 1.500 3z" fill="none" stroke="#42b9c2" strokeWidth=".7" />
    <g fontFamily={UI} fontSize="5" fill="#42b9c2"><text x="140" y="5">&gt; 1</text><text x="156" y="5">5.500  GHz</text><text x="162" y="11">24.20 pF</text><g textAnchor="end"><text x="212" y="5">116.61 Ω</text><text x="212" y="11">-1.19 Ω</text></g></g>
  </>
);
const Trace3 = () => (
  <>
    <Axis labels={DB} />
    <path d={smooth(pairs('19,65 25,67 33,65.500 38,69.500 45,73 49,80 52,85 54,77 58,75.500 63,70 70,67.500 77,64 80,65.500 85,64 89,67 94,72.500 98,72.500 102,65 107,55.500 114,46 122,39 131,35.500 140,34.500 160,34.500 215,34.300'))} fill="none" stroke="#a832a8" />
    <path d="M118 36v5M117 37l1 3 1-3" stroke="#a832a8" strokeWidth=".8" fill="none" />
    <path d="M17 55h2v2h-2zM214.500 55h2v2h-2z" fill="#e030e0" />
    <Readout c="#b42cb4" v="-8.31 dB" />
  </>
);
const Trace4 = () => (
  <>
    <Axis labels={PHASE} />
    <path d={`M19 75L44 99V11${smooth(pairs('44,11 78,45 98,69 109,85 117,99')).replace('M44 11', 'L44 11')}V11${smooth(pairs('117,11 128,32 136,45 141,50.500 144,51 145.500,48 146.500,36 147.500,27 149,24.500 153,25.500 162,33 175,46 188,60 198,66.500 202,66.500 204.500,63 207,53 209,46 212,44 214,45.500')).replace('M117 11', 'L117 11')}`} fill="none" stroke="#2fae2f" />
    <path d="M17 54.500h2v2h-2zM214.500 54.500h2v2h-2z" fill="#30e030" />
    <Readout c="#2fae2f" v="-178.85 °" />
  </>
);
const PLOTS: [string, string, string, React.ReactNode][] = [
  ['Tr 1', 'S21 LogM 10.00dB/  -20.0dB', '#e2e22a', <Trace1 key="1" />],
  ['Tr 2', 'S11 Smith 1.000U/  1.00U', '#35d4dc', <Trace2 key="2" />],
  ['Tr 3', 'S22 LogM 10.00dB/  -20.0dB', '#d622d6', <Trace3 key="3" />],
  ['Tr 4', 'S21 Phase 45.00°/  0.00°', '#22d822', <Trace4 key="4" />],
];

const Soft = styled.aside`
  grid-row: 1 / 3; grid-column: 2; align-self: start; display: grid; grid-template-columns: 1fr 19px; grid-template-rows: 10px 175px;
  background: #6b6d75; border: 1px solid #44464d;
`;
const PanelHead = styled.h2`
  grid-column: 1 / -1; display: flex; justify-content: space-between; align-items: center; margin: 0; padding: 0 2px;
  background: #27374f; color: #e4e9f2; font: 4px/9px ${UI};
`;
const SoftKeys = styled.div`display: grid; grid-template-rows: repeat(8, 1fr); gap: 3px; padding: 1px;`;
const keyFace = css`
  border: 0; border-radius: 1px; background: linear-gradient(#ededee, #c3c3c7); color: #222;
  box-shadow: inset 0 0 0 1px rgba(120, 122, 130, .45);
`;
const SoftKey = styled.button<{ $blank?: boolean }>`
  ${keyFace}
  ${p => p.$blank && css`background: linear-gradient(#7d8088, #686a72); box-shadow: inset 0 0 0 1px #55575e;`}
  display: flex; flex-direction: column; justify-content: center; font-size: 4px; line-height: 5px; white-space: nowrap;
  align-items: center;
`;
const Sub = styled.small`font-size: 3px; border-top: 1px solid #bbb; padding: 1px 8px 0; margin-top: 2px; line-height: 5px;`;
const SoftTabs = styled.div`display: flex; flex-direction: column; background: #434343;`;
const SoftTab = styled.button<{ $on?: boolean }>`
  height: 13px; border: 0; border-bottom: 1px solid #5a5a5a; font-size: 4px; line-height: 4px; color: #cfcfcf;
  background: ${p => (p.$on ? '#777a80' : '#4a4a4c')};
`;
const Hard = styled.aside`
  grid-row: 1 / 3; grid-column: 3; background: #686a70; display: flex; flex-direction: column; border: 1px solid #4b4d54;
`;
const HardHead = styled(PanelHead)`flex: 0 0 9px; padding: 0 1px;`;
const Section = styled.h3`margin: 0; text-align: center; font: 4px/4px ${UI}; color: #e8e8e8; padding: 1px 0 0;`;
const KeyGrid = styled.div`display: grid; grid-template-columns: 1fr 1fr; gap: 2px 1px; padding: 0 0 1px;`;
const Key = styled.button<{ $narrow?: boolean }>`
  ${keyFace}
  height: 17px; font-size: ${p => (p.$narrow ? 3 : 4)}px; line-height: 5px;
`;
const HARD: [string, string[]][] = [
  ['Instrument', ['Prev', 'Next', 'Trace', 'Channel', 'Display', 'Setup']],
  ['Response', ['Meas', 'Format', 'Scale', 'Math', 'Avg BW', 'Cal', 'Marker', 'Search']],
  ['Stimulus', ['Freq', 'Power', 'Sweep', 'Trigger']],
  ['Utility', ['Save Recall', 'Macro', 'System', 'Undo', 'Help', 'Preset']],
];
const CloseX = () => <svg width="4" height="4" viewBox="0 0 4 4" stroke="#dde" strokeWidth=".9"><path d="M.5 .5l3 3M3.500 .5l-3 3" /></svg>;
const TOOL_PATHS = ['M2 2L1 3.500 2.500 5M1 3.500h4q1.500 0 1 2', 'M5 2l1 1.500L4.500 5M6 3.500H2q-1.500 0-1 2', 'M1 6l2-4 2 4M5 2l1 4', 'M1 1h5v5H1zM1 3h5', 'M1 2h5v4H1zM2.500 1v2M4.500 4h1', 'M3 1a2 2 0 1 0 .1 0M4.500 4.500L6 6'];

const Analyzer = () => (
  <VnaWindow $bg="#cbcbcd">
    <VnaMenu $gap={3} $h={6}>{['File', 'Instrument', 'Response', 'Stimulus', 'Utility', 'Help'].map(m => <MenuItem $small key={m}>{m}</MenuItem>)}</VnaMenu>
    <VnaBody>
      <VnaTools>
        {TOOL_PATHS.map(d => <DarkButton key={d} aria-label="Toolbar action"><svg width="7" height="7" viewBox="0 0 7 7" fill="none" stroke="#e8e8e8" strokeWidth=".8"><path d={d} /></svg></DarkButton>)}
        <FreqBar>Start Frequency<FreqInput defaultValue="1 GHz" /><svg width="6" height="6"><path d="M0 0h6v6H0z" fill="#9aa3b5" /><path d="M0 2h6M0 4h6M2 0v6M4 0v6" stroke="#444" strokeWidth=".5" /></svg></FreqBar>
      </VnaTools>
      <Plots>
        {PLOTS.map(([tag, title, c, art], i) => (
          <Plot key={tag}>
            <PlotHead $c={c}><TraceTag $c={c}>{tag}</TraceTag>{title}</PlotHead>
            <svg width="100%" height="109" viewBox="0 0 217 109">{art}</svg>
            <PlotFoot><Chip>{i + 1}</Chip><span>{'>Ch1  Start  1.00000 GHz'}</span><Dash $c={c} /><Spacer /><span>Stop  10.0000 GHz</span></PlotFoot>
          </Plot>
        ))}
      </Plots>
      <Soft>
        <PanelHead>System<CloseX /></PanelHead>
        <SoftKeys>
          <SoftKey>Next/Prev Keys ▾<Sub>Trace</Sub></SoftKey>
          <SoftKey>Preferences...</SoftKey>
          <SoftKey>Sound<Sub>Off</Sub></SoftKey>
          <SoftKey $blank aria-label="Unused" />
          <SoftKey><span>Remote</span><span>Interface...</span></SoftKey>
          <SoftKey $blank aria-label="Unused" /><SoftKey $blank aria-label="Unused" /><SoftKey $blank aria-label="Unused" />
        </SoftKeys>
        <SoftTabs>{['Main', 'System Setup', 'Print', 'Help', 'Service'].map((t, i) => <SoftTab key={t} $on={i === 1}>{t}</SoftTab>)}</SoftTabs>
      </Soft>
      <Hard>
        <HardHead>Hardkeys<CloseX /></HardHead>
        {HARD.map(([s, keys]) => (
          <React.Fragment key={s}>
            <Section>{s}</Section>
            <KeyGrid>{keys.map(k => <Key key={k} $narrow={k.length === 7 || k === 'System'}>{k}</Key>)}</KeyGrid>
          </React.Fragment>
        ))}
      </Hard>
      <VnaStatus>{['Tr 1', 'Ch 1', 'IntTrig', 'Swp', 'BW=100k', 'C  2-Port', 'SrcCal', 'LCL'].map((s, i) => <StatusText key={s} $dim={i > 5}>{s}</StatusText>)}</VnaStatus>
    </VnaBody>
  </VnaWindow>
);

/* ---------- Script window ---------- */

const ScriptTools = styled.div`
  display: flex; align-items: flex-end; gap: 3px; flex: 0 0 25px; margin-top: 16px; padding: 0 0 12px 24px;
  background: linear-gradient(#fff 6px, #f1f1f1 7px, #f1f1f1);
  white-space: nowrap; font-size: 6px;
`;
const BlueLine = styled.div`flex: 0 0 5px; background: #0b63c8;`;
const Code = styled.pre`
  margin: 0; flex: 1; padding: 2px 0 0 1px; font: 5px/5px ${UI};
`;
const CodeLine = styled.span`display: block; min-height: 5px;`;
const ScriptFoot = styled.div`flex: 0 0 10px; border-top: 2px solid #bdbdbd; background: #f1f1f1;`;
const Script = () => (
  <ScriptWindow>
    <ScriptTools><span>•</span><span>Show Context Window</span></ScriptTools>
    <BlueLine />
    <Code>
      <CodeLine><b>opy</b> ("0")</CodeLine>
      <CodeLine>"100000")</CodeLine>
      <CodeLine />
      <CodeLine><b>es</b> (TIME, True, Corrected, 1, 2, False)</CodeLine>
      <CodeLine><b>ogenAdd</b> (TIME, "1")</CodeLine>
      <CodeLine>00)</CodeLine>
    </Code>
    <ScriptFoot />
  </ScriptWindow>
);

/* ---------- System Tools ---------- */

const ToolTabs = styled.div`display: flex; gap: 1px; flex: 0 0 11px; padding: 2px 0 0 3px; background: #f0f0f0;`;
const ToolTab = styled.button<{ $on?: boolean }>`
  border: 0; padding: 0 2px; white-space: nowrap; background: ${p => (p.$on ? '#fff' : 'none')};
`;
const ToolBody = styled.div`
  display: grid; grid-template-columns: 56px 1fr; gap: 2px; flex: 1; min-height: 0; margin: 0 3px;
  padding: 12px 10px 4px 6px; background: #fff; border-bottom: 1px solid #ddd;
`;
const SideForm = styled.form`display: flex; flex-direction: column; gap: 3px; padding-top: 5px;`;
const FlatButton = styled.button<{ $h?: number; $min?: number }>`
  min-height: ${p => p.$h ?? 9}px; min-width: ${p => p.$min ?? 0}px; padding: 0 2px;
  border: 1px solid #b4b4b4; background: #e1e1e1; font-size: 5px; line-height: 5px;
  &:disabled { background: #c9c9c9; color: #9b9b9b; }
`;
const CheckLabel = styled.label`
  display: flex; align-items: center; gap: 2px; margin: 2px 0 3px 1px; font-size: 5px; line-height: 5px;
`;
const Group = styled.fieldset`
  margin: 6px 0 0; padding: 2px 2px 4px; border: 1px solid #dcdcdc; font-size: 5px; line-height: 6px;
  legend { padding: 0 1px; }
`;
const RadioLabel = styled.label`display: flex; align-items: center; gap: 2px; height: 8px;`;
const Radio = styled.input.attrs({ type: 'radio' })`
  appearance: none; width: 5px; height: 5px; border: 1px solid #444; border-radius: 50%; background: #fff;
  &:checked { background: #333; box-shadow: inset 0 0 0 1px #ddd; }
`;
const TreeBox = styled.div`
  display: grid; grid-template-columns: 1fr 6px; grid-template-rows: 1fr 7px; min-height: 0; border: 1px solid #9c9c9c;
`;
const Tree = styled.ul`margin: 0; padding: 0; list-style: none; overflow: hidden; min-height: 0;`;
const TreeItem = styled.li<{ $on?: boolean; $it?: boolean }>`
  display: flex; align-items: center; gap: 3px; height: 6px; padding-left: 2px;
  font-size: 5px; line-height: 6px; white-space: nowrap;
  font-style: ${p => (p.$it ? 'italic' : 'normal')};
  ${p => p.$on && css`background: #0a64c8; color: #fff;`}
`;
const ToolFoot = styled.footer`
  display: flex; justify-content: flex-end; align-items: center; gap: 3px; flex: 0 0 14px; padding-right: 2px;
`;
const TREE = ['10 to 30 alrrm', '10 to 67 GHz alrrm 100 um', '10 to 30 GHz alrrm 100 um', '10 to 67 GHz alrrm hybrid 100 um', '10 to 67 scratch generated', 'BLEND', '10 to 67 new alrrm', '10 to 30 new alrrm', '10 to 67 new hybrid']
  .concat([67, 68, 69, 70, 71].map(n => `2-Port LRRM gfisher ${n}`), '2-Port LRRM gfisher', Array.from({ length: 15 }, (_, i) => `2-Port LRRM gfisher ${72 + i}`), '2-Port SOLT gfisher');

const SystemTools = () => (
  <ToolsWindow>
    <TitleBar $h={11}><Glyph name="tools" size={7} /><TitleText>System Tools</TitleText><Caption aria-label="Close"><Close /></Caption></TitleBar>
    <ToolTabs>{['Probe-Contact', 'System Repeatability', 'Error Set Manager', 'Error Set Augment', 'Compare Error Sets'].map((t, i) => <ToolTab key={t} $on={i === 2}>{t}</ToolTab>)}</ToolTabs>
    <ToolBody>
      <SideForm>
        <FlatButton type="button">Add Error Set From Disk</FlatButton>
        <FlatButton type="button">Add Error Set From VNA</FlatButton>
        <FlatButton type="button">Send Error Set to VNA</FlatButton>
        <CheckLabel><Check />Also Send Stimulus Settings to VNA</CheckLabel>
        <FlatButton type="button" $h={22}>Send Settings to the Stimulus Settings Window</FlatButton>
        <Group>
          <legend>Correction Applied By</legend>
          <RadioLabel><Radio name="by" defaultChecked />VNA</RadioLabel>
          <RadioLabel><Radio name="by" />WinCal</RadioLabel>
        </Group>
      </SideForm>
      <TreeBox>
        <Tree>
          {TREE.map(t => (
            <TreeItem key={t} $on={t.endsWith('83')} $it={t.endsWith('84')}>
              <svg width="4" height="4"><path d="M.5 .5h3v3h-3z" fill="#fff" stroke="#555" strokeWidth=".8" /><path d="M1 2h2M2 1v2" stroke="#222" strokeWidth=".6" /></svg>{t}
            </TreeItem>
          ))}
        </Tree>
        <VScroll $top={87} $size={95}><Arrow d="u" /><Arrow d="d" /></VScroll>
        <HScroll $to="165px"><Arrow d="l" /><Arrow d="r" /></HScroll>
      </TreeBox>
    </ToolBody>
    <ToolFoot>
      <FlatButton $min={60}>Advanced Augmentation</FlatButton>
      <FlatButton $min={88} disabled>Auto Apply Error Set To Stimulus Settings</FlatButton>
      <FlatButton $min={29}>Help</FlatButton>
      <FlatButton $min={29}>Close</FlatButton>
    </ToolFoot>
  </ToolsWindow>
);

export default function App() {
  return (
    <>
      <Global />
      <Desktop>
        <Wallpaper />
        <WallpaperFoot />
        <Script />
        <Analyzer />
        <Calibration />
        <WinCal />
        <RfViewer />
        <SystemTools />
      </Desktop>
    </>
  );
}
